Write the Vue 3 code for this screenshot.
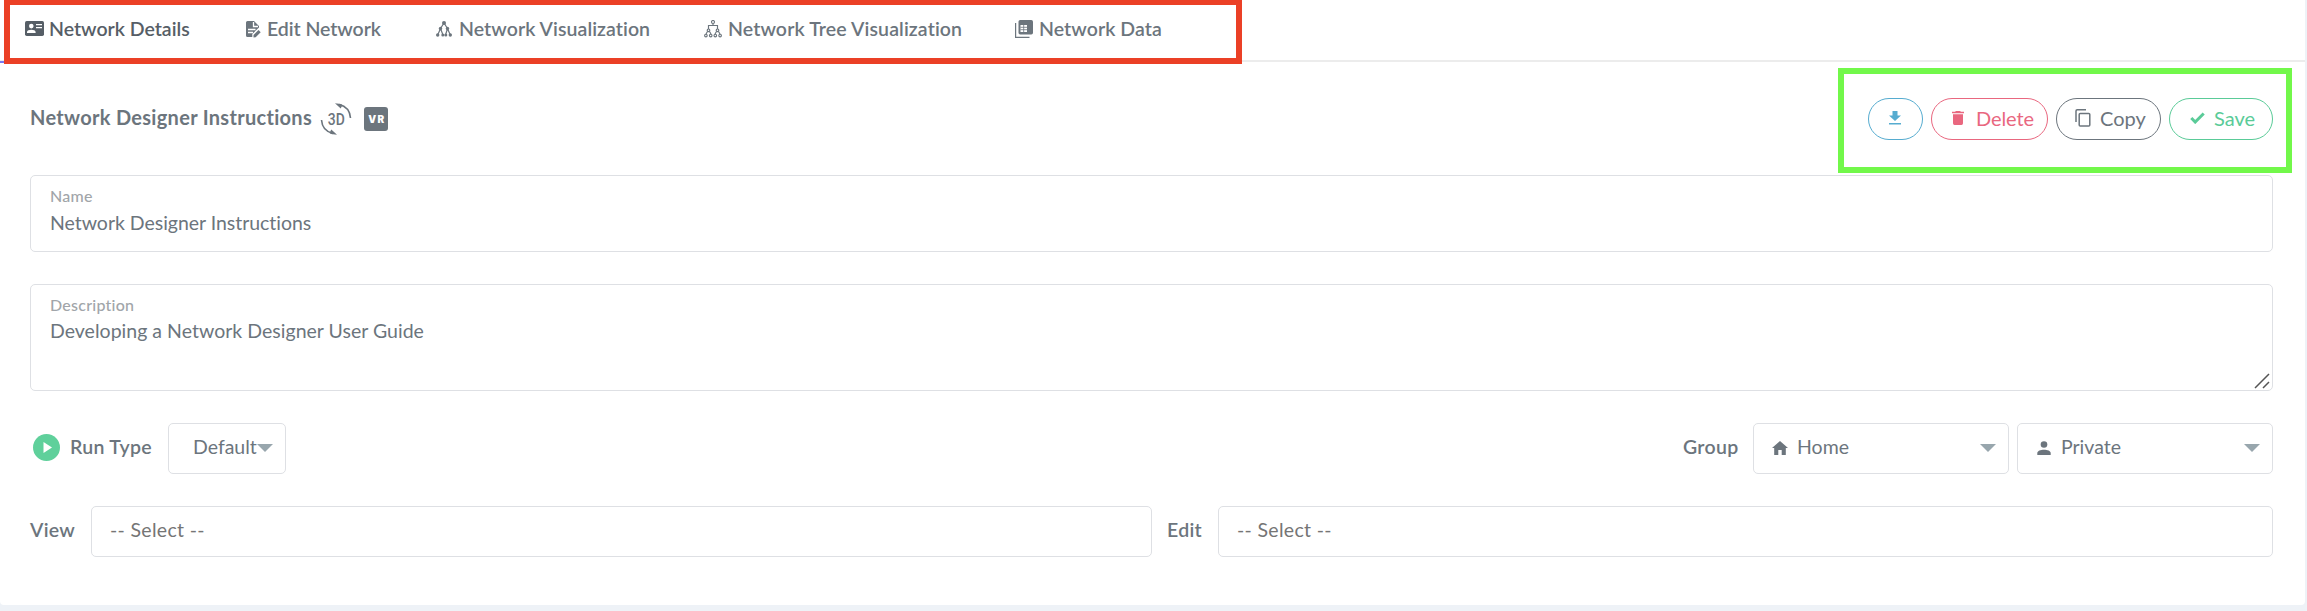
<script setup>
const tabs = [
  { id: 'details', label: 'Network Details' },
  { id: 'edit', label: 'Edit Network' },
  { id: 'graph', label: 'Network Visualization' },
  { id: 'tree', label: 'Network Tree Visualization' },
  { id: 'data', label: 'Network Data' }
]
</script>

<template>
  <main class="page">
    <section class="card">
      <nav class="tabs">
        <a v-for="tab in tabs" :key="tab.id" :class="['tab', tab.id]">
          <svg v-if="tab.id === 'details'" width="19" height="15" viewBox="0 0 19 15">
            <rect width="19" height="15" rx="1.7" fill="currentColor" />
            <circle cx="6.3" cy="5.1" r="2.3" fill="#fff" />
            <path d="M2 12v-1c0-3 8.600-3 8.600 0v1zM11 3h6v1.300h-6zM11 6h6v1.300h-6z" fill="#fff" />
          </svg>
          <svg v-else-if="tab.id === 'edit'" width="15" height="17" viewBox="0 0 15 17">
            <path d="M1.500 0H8l5 5v1.500L6.300 13v3H1.500Q0 16 0 14.500v-13Q0 0 1.500 0z" fill="currentColor" />
            <path d="M7.500 1v4.500H12M2 8.500h7.500M2 11.500h5" fill="none" stroke="#fff" stroke-width="1.300" />
            <path d="M7.500 16.500v-2.400l5-5 2.200 2.200-5 5z" fill="currentColor" />
          </svg>
          <svg v-else-if="tab.id === 'graph'" width="16" height="16" viewBox="0 0 16 16">
            <path d="M8 2L4.500 7.500 1.700 14M8 2l3.500 5.500 2.800 6.500M4.500 7.500L7 14M11.500 7.500L9.500 14" fill="none" stroke="currentColor" stroke-width="1.200" />
            <g fill="currentColor"><circle cx="8" cy="2" r="2" /><circle cx="4.500" cy="7.500" r="1.700" /><circle cx="11.500" cy="7.500" r="1.700" /><circle cx="1.700" cy="14" r="1.700" /><circle cx="6.800" cy="14" r="1.500" /><circle cx="9.800" cy="14" r="1.500" /><circle cx="14.300" cy="14" r="1.700" /></g>
          </svg>
          <svg v-else-if="tab.id === 'tree'" width="18" height="18" viewBox="0 0 18 18">
            <g fill="none" stroke="currentColor" stroke-width="1.150"><circle cx="9" cy="2" r="1.500" /><path d="M9 3.500v2M4.500 9V5.500h9V9M3.500 11.500L2 14M5.500 11.500L7 14M12.500 11.500L11 14M14.500 11.500L16 14" /><circle cx="4.500" cy="10.300" r="1.300" /><circle cx="13.500" cy="10.300" r="1.300" /><circle cx="1.900" cy="15.500" r="1.300" /><circle cx="6.700" cy="15.500" r="1.300" /><circle cx="11.300" cy="15.500" r="1.300" /><circle cx="16.100" cy="15.500" r="1.300" /></g>
          </svg>
          <svg v-else width="18" height="18" viewBox="0 0 18 18">
            <rect x="3.500" width="14.500" height="14.500" rx="1.700" fill="currentColor" />
            <path d="M.600 3v14.300H14.500" fill="none" stroke="currentColor" stroke-width="1.200" />
            <rect x="5.500" y="5" width="6.500" height="7" fill="#fff" />
            <path d="M5.500 7.300H12M5.500 9.700H12M8.700 5v7" stroke="currentColor" stroke-width=".8" />
          </svg>
          <span>{{ tab.label }}</span>
        </a>
        <div class="marker red"></div>
      </nav>

      <header class="heading">
        <h1>Network Designer Instructions</h1>
        <svg class="spin" width="32" height="32" viewBox="0 0 32 32">
          <path d="M19 1.500c6.500 1.500 11 6.500 11.500 13.500M1.500 17c.5 7 5 12 11.500 13.500" fill="none" stroke="currentColor" stroke-width="1.600" />
          <path d="M15 .3l6 .700 1.500 1-1.800 3.400zM17 31.700l-6-.7-1.500-1 1.800-3.400z" fill="currentColor" />
          <text x="7.800" y="21.500" textLength="17" lengthAdjust="spacingAndGlyphs">3D</text>
        </svg>
        <span class="vr">VR</span>
        <div class="actions">
          <button class="download"><svg width="12" height="14" viewBox="0 0 12 14"><path d="M3.500 0h5v4.500H12L6 10 0 4.500h3.500zM0 12h12v1.500H0z" fill="currentColor" /></svg></button>
          <button class="delete"><svg width="12" height="14" viewBox="0 0 12 14"><path d="M0 .8h3L4 0h4l1 .8h3v1.400H0zM1 3.200h10v9Q11 14 9.500 14h-7Q1 14 1 12.200z" fill="currentColor" /></svg><span>Delete</span></button>
          <button class="copy"><svg width="16" height="18" viewBox="0 0 16 18"><path d="M1 13V2Q1 .8 2.200.8H11M5.200 4.500h8.600q1 0 1 1v10.400q0 1-1 1H5.200q-1 0-1-1V5.500q0-1 1-1z" fill="none" stroke="currentColor" stroke-width="1.500" /></svg><span>Copy</span></button>
          <button class="save"><svg width="15" height="12" viewBox="0 0 15 12"><path d="M1.300 6l3.900 4L13.700 1.500" fill="none" stroke="currentColor" stroke-width="3" /></svg><span>Save</span></button>
        </div>
        <div class="marker green"></div>
      </header>

      <div class="field name"><label>Name</label><p>Network Designer Instructions</p></div>
      <div class="field description">
        <label>Description</label><p>Developing a Network Designer User Guide</p>
        <svg class="grip" width="16" height="16" viewBox="0 0 16 16"><path d="M1 15L15 1M9 15l6-6" stroke="#555" stroke-width="1.500" /></svg>
      </div>

      <div class="row options">
        <svg class="play" width="27" height="27" viewBox="0 0 27 27"><circle cx="13.500" cy="13.500" r="13.500" fill="#5fd09b" /><path d="M10.500 8v11l8.500-5.500z" fill="#fff" /></svg>
        <strong class="run">Run Type</strong>
        <div class="select default"><span>Default</span><i></i></div>
        <strong class="group">Group</strong>
        <div class="select wide"><svg width="16" height="14" viewBox="0 0 16 14"><path d="M8 0l8 7h-2.200v7H9.700V9H6.300v5H2.200V7H0z" fill="currentColor" /></svg><span class="home">Home</span><i></i></div>
        <div class="select wide private"><svg width="14" height="14" viewBox="0 0 14 14"><circle cx="7" cy="3.500" r="3.300" fill="currentColor" /><path d="M.3 14v-2C.3 7.500 13.700 7.500 13.700 12v2z" fill="currentColor" /></svg><span class="priv">Private</span><i></i></div>
      </div>
      <div class="row access">
        <strong class="view">View</strong><div class="entry first">-- Select --</div>
        <strong class="ed">Edit</strong><div class="entry second">-- Select --</div>
      </div>
    </section>
  </main>
</template>

<style>
body { background: #eef2f7; }
</style>

<style scoped>
* { box-sizing: border-box; }
.page { height: 611px; overflow: hidden; font: 400 19.5px/24px Lato, "Open Sans", sans-serif; color: #6c757d; background: #eef2f7; }
.card { width: 2305px; height: 605px; background: #fff; border-radius: 0 0 4px 4px; }
.tabs { position: relative; height: 62px; border-bottom: 2px solid #ececec; display: flex; padding-left: 25px; }
.tab { display: flex; align-items: flex-start; height: 60px; padding-top: 17px; font-weight: 600; white-space: nowrap; }
.tab svg { margin-top: 4px; flex: none; }
.tab span { margin-left: 6px; letter-spacing: .07px; }
.details { width: 221px; color: #565e66; }
.details span { margin-left: 5px; letter-spacing: 0; }
.edit { width: 190px; }
.edit span { letter-spacing: -.05px; }
.graph { width: 268px; }
.graph span { margin-left: 7px; }
.tree { width: 311px; }
.tree span { letter-spacing: .12px; }
.tree svg, .data svg { margin-top: 3px; }
.marker { position: absolute; pointer-events: none; }
.red { left: 4px; top: -1px; width: 1238px; height: 65px; border: 6px solid #eb4026; }
.tabs::before { content: ""; position: absolute; left: 0; top: 61px; width: 5px; height: 2px; background: #7a79ef; }
.heading { position: relative; height: 113px; padding: 0 32px 0 30px; display: flex; align-items: flex-start; }
h1 { margin: 43px 0 0; width: 290px; font-size: 20px; line-height: 24px; font-weight: 700; white-space: nowrap; letter-spacing: .3px; }
.spin { margin-top: 41px; flex: none; }
.spin text { font: 500 16px Roboto, sans-serif; fill: currentColor; }
.vr { margin: 45px 0 0 12px; width: 24px; height: 24px; border-radius: 3px; background: #6c757d; color: #fff; font: 900 10px/24px Inter, sans-serif; text-align: center; letter-spacing: 1.5px; padding-left: 2px; }
.actions { display: flex; gap: 8px; margin: 36px 0 0 auto; }
button { height: 42px; border: 1px solid; border-radius: 21px; background: #fff; font: inherit; font-size: 20px; display: flex; align-items: center; padding: 0 0 2px; }
button svg { flex: none; }
.download { width: 55px; padding-left: 20px; color: #56acd0; }
.delete { width: 117px; padding-left: 20px; color: #e9677f; }
.delete span { margin-left: 12px; letter-spacing: -.1px; }
.copy { width: 105px; padding-left: 18px; color: #6c757d; }
.copy span { margin-left: 9px; }
.save { width: 104px; padding-left: 20px; color: #5acb98; }
.save span { margin-left: 9px; }
.green { left: 1838px; top: 6px; width: 454px; height: 105px; border: 6px solid #72f84a; }
.field, .select, .entry { border: 1px solid #dee0e4; border-radius: 5px; background: #fff; }
.field { position: relative; width: 2243px; margin-left: 30px; padding: 10px 19px; }
.name { height: 77px; }
.description { height: 107px; margin-top: 32px; }
.field label { display: block; font-size: 16px; line-height: 20px; color: #a1a5a9; font-weight: 500; letter-spacing: .25px; }
.field p { margin: 5px 0 0; line-height: 24px; letter-spacing: -.03px; }
.description p { margin-top: 4px; letter-spacing: .02px; }
.grip { position: absolute; right: 2px; bottom: 1px; }
.row { display: flex; align-items: center; height: 51px; width: 2243px; margin-left: 30px; white-space: nowrap; }
.row strong { font-weight: 600; letter-spacing: .3px; padding-bottom: 3px; }
.options { margin-top: 32px; }
.play { margin-left: 3px; margin-bottom: 2px; }
.run { margin-left: 10px; width: 98px; }
.select { height: 51px; display: flex; align-items: center; padding-bottom: 2px; }
.select i { border: 8px solid transparent; border-top: 8px solid #98a6ad; border-bottom: 0; margin-left: auto; }
.select svg { margin-right: 9px; }
.select span { margin-top: -1px; }
.default { width: 118px; padding: 0 12px 2px 24px; }
.group { margin-left: auto; width: 70px; }
.wide { width: 256px; padding: 0 12px 2px 18px; }
.private { margin-left: 8px; padding-left: 19px; }
.private svg { margin-right: 10px; }
.access { margin-top: 32px; }
.view { width: 61px; }
.entry { height: 51px; padding: 11px 18px; line-height: 24px; color: #757575; letter-spacing: .32px; }
.first { width: 1061px; }
.ed { margin-left: 15px; width: 51px; }
.second { width: 1055px; }
</style>
